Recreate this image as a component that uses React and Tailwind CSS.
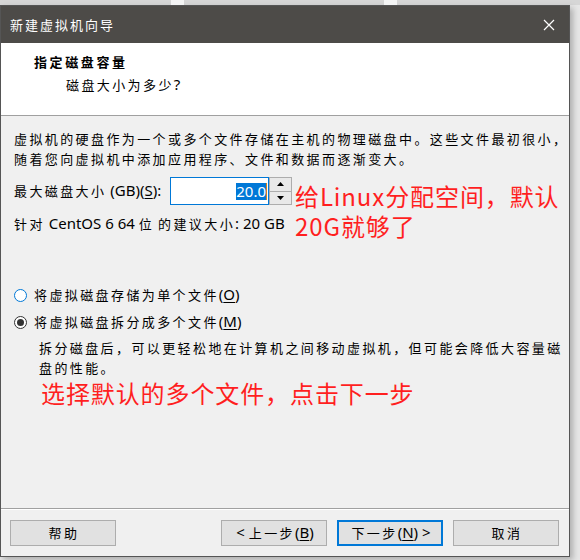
import React from "react";

const CJK = /([\u2E80-\u9FFF\u3000-\u303F\uFF00-\uFFEF]+)/;

// Chinese runs keep the wide dialog spacing, Latin runs use a plain 15px face.
// "&X" marks a mnemonic letter (underlined).
function T({ s }) {
  return (
    <span>
      {s.split(CJK).map((part, i) => {
        if (!part) return null;
        if (CJK.test(part)) return <span key={i}>{part}</span>;
        const bits = part.split(/&(.)/);
        return (
          <span key={i} className="font-['Noto_Sans',sans-serif] text-[15px] leading-none tracking-normal">
            {bits.map((b, j) =>
              j % 2 ? (
                <span key={j} className="underline underline-offset-2">{b}</span>
              ) : (
                b
              )
            )}
          </span>
        );
      })}
    </span>
  );
}

function Radio({ checked, focus }) {
  return (
    <span
      className={
        "flex h-[13px] w-[13px] shrink-0 items-center justify-center rounded-full border bg-white " +
        (focus ? "border-[#0078d7]" : "border-[#333333]")
      }
    >
      {checked && <span className="h-[7px] w-[7px] rounded-full bg-[#333333]" />}
    </span>
  );
}

function Btn({ s, focus }) {
  return (
    <button
      className={
        "flex h-[26px] w-[106px] items-center justify-center whitespace-pre bg-[#e1e1e1] pl-[2px] text-[13px] leading-[20px] tracking-[2.4px] text-black " +
        (focus ? "border-2 border-[#0078d7]" : "border border-[#adadad]")
      }
    >
      <T s={s} />
    </button>
  );
}

export default function App() {
  return (
    <div className="relative h-[560px] w-[580px] overflow-hidden bg-[#e6e6e6] font-['Noto_Sans_CJK_SC',sans-serif] text-black">
      {/* desktop strip above the dialog */}
      <div className="flex h-[5px] bg-[#d6d6d6]">
        <div className="ml-[171px] w-[13px] bg-[#f4f4f4]" />
        <div className="ml-[200px] w-[13px] bg-[#f4f4f4]" />
      </div>

      <div className="flex h-[552px] w-[570px] flex-col border border-[#555555] bg-[#f0f0f0] shadow-[3px_3px_6px_rgba(0,0,0,0.25)]">
        {/* title bar */}
        <div className="flex h-[37px] items-center justify-between bg-[#4d4b48] pl-[9px] pr-[14px]">
          <span className="text-[13px] tracking-[2px] text-white">新建虚拟机向导</span>
          <svg width="12" height="12" viewBox="0 0 12 12">
            <path d="M1 1 L11 11 M11 1 L1 11" stroke="white" strokeWidth="1.2" />
          </svg>
        </div>

        {/* header */}
        <div className="h-[73px] border-b border-[#a0a0a0] bg-white pt-[9px]">
          <div className="pl-[33px] text-[13px] font-bold leading-[20px] tracking-[2.6px]">指定磁盘容量</div>
          <div className="mt-[3px] pl-[65px] text-[13px] leading-[20px] tracking-[2.4px]">
            <T s="磁盘大小为多少?" />
          </div>
        </div>

        {/* body */}
        <div className="relative flex h-[392px] flex-col pl-[13px] text-[13px] tracking-[2.4px]">
          <p className="mt-[13px] whitespace-nowrap leading-[20px]">
            虚拟机的硬盘作为一个或多个文件存储在主机的物理磁盘中。这些文件最初很小，
            <br />
            随着您向虚拟机中添加应用程序、文件和数据而逐渐变大。
          </p>

          <div className="mt-[8px] flex h-[28px] items-center">
            <span className="w-[156px] shrink-0 whitespace-nowrap leading-[20px]">
              <T s="最大磁盘大小 (GB)(&S):" />
            </span>
            <div className="flex h-[28px] w-[99px] shrink-0 items-center justify-end border border-[#0078d7] bg-white pr-[1px]">
              <span className="bg-[#0078d7] font-['Noto_Sans',sans-serif] text-[15px] leading-[17px] tracking-normal text-white">20.0</span>
              <span className="h-[17px] w-px bg-[#d08020]" />
            </div>
            <div className="flex h-[28px] w-[23px] shrink-0 flex-col">
              <div className="flex flex-1 items-center justify-center border border-[#adadad] bg-[#e9e9e9]">
                <svg width="7" height="4" viewBox="0 0 7 4"><path d="M3.5 0 L7 4 L0 4 Z" fill="black" /></svg>
              </div>
              <div className="flex flex-1 items-center justify-center border border-t-0 border-[#adadad] bg-[#e9e9e9]">
                <svg width="7" height="4" viewBox="0 0 7 4"><path d="M0 0 L7 0 L3.5 4 Z" fill="black" /></svg>
              </div>
            </div>
          </div>

          <p className="mt-[9px] whitespace-pre leading-[20px]">
            <T s="针对 CentOS 6 64 位 的建议大小: 20 GB" />
          </p>

          <label className="mt-[51px] flex h-[20px] items-center gap-[7px]">
            <Radio focus />
            <span className="whitespace-nowrap leading-[20px]">
              <T s="将虚拟磁盘存储为单个文件(&O)" />
            </span>
          </label>
          <label className="mt-[7px] flex h-[20px] items-center gap-[7px]">
            <Radio checked />
            <span className="whitespace-nowrap leading-[20px]">
              <T s="将虚拟磁盘拆分成多个文件(&M)" />
            </span>
          </label>

          <p className="mt-[6px] whitespace-nowrap pl-[25px] leading-[20px]">
            拆分磁盘后，可以更轻松地在计算机之间移动虚拟机，但可能会降低大容量磁
            <br />
            盘的性能。
          </p>

          <p className="whitespace-nowrap pl-[27px] text-[24px] leading-[30px] tracking-[0.9px] text-[#ff1f1f]">
            选择默认的多个文件，点击下一步
          </p>

          {/* annotation over the dialog */}
          <div className="absolute left-[294px] top-[65px] whitespace-nowrap text-[24px] leading-[30px] tracking-[0.9px] text-[#ff1f1f]">
            给Linux分配空间，默认
            <br />
            20G就够了
          </div>
        </div>

        {/* footer */}
        <div className="h-[48px] border-t border-[#a0a0a0]">
          <div className="flex h-full border-t border-white pl-[9px] pr-[10px] pt-[10px]">
            <Btn s="帮助" />
            <div className="ml-auto flex gap-[10px]">
              <Btn s="< 上一步(&B)" />
              <Btn s="下一步(&N) >" focus />
              <Btn s="取消" />
            </div>
          </div>
        </div>
      </div>
    </div>
  );
}
